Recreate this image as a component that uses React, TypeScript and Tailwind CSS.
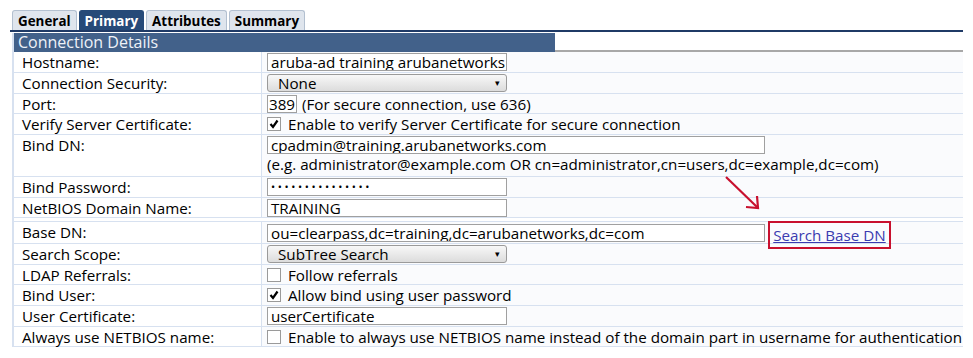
import React from "react";

const font = { fontFamily: '"Open Sans", "Noto Sans", sans-serif' };

function Row({ label, children, h = "h-[20.8px]" }: { label: string; children?: React.ReactNode; h?: string }) {
  return (
    <div className={`flex ${h} border-b border-[#d7e1f0]`}>
      <div className="w-[248px] shrink-0 border-r border-[#d7e1f0] pl-[8px] leading-[20px] whitespace-nowrap">{label}</div>
      <div className="flex-1 bg-[#fafbfd] pl-[5px] flex items-start whitespace-nowrap">{children}</div>
    </div>
  );
}

function TextBox({ w, value, small, tight }: { w: string; value: string; small?: boolean; tight?: boolean }) {
  return (
    <div
      className={`${w} h-[18px] mt-[1px] border border-[#a0a0a0] bg-white leading-[16px] whitespace-nowrap overflow-hidden ${
        tight ? "pl-[1px]" : "pl-[3px]"
      } ${small ? "text-[11px] tracking-[2.6px]" : ""}`}
    >
      {value}
    </div>
  );
}

function Select({ value }: { value: string }) {
  return (
    <div className="w-[240px] h-[18px] mt-[1px] border border-[#9a9a9a] rounded-[3px] bg-gradient-to-b from-[#f8f8f8] to-[#dcdcdc] leading-[16px] pl-[10px] pr-[6px] flex justify-between">
      <span>{value}</span>
      <span className="text-[9px] leading-[16px]">▾</span>
    </div>
  );
}

function Check({ checked, text }: { checked?: boolean; text: string }) {
  return (
    <div className="flex items-center h-[20px]">
      <div className="w-[14px] h-[14px] border border-[#9a9a9a] bg-white flex items-center justify-center">
        {checked && (
          <svg width="10" height="10" viewBox="0 0 10 10">
            <path d="M1.5 5 L4 8 L8.5 1.5" stroke="#000" strokeWidth="2.2" fill="none" />
          </svg>
        )}
      </div>
      <span className="ml-[7px] leading-[20px]">{text}</span>
    </div>
  );
}

export default function App() {
  return (
    <div className="w-[973px] h-[358px] bg-white text-[15.2px] text-black relative overflow-hidden" style={font}>
      <div className="pt-[10px] pl-[12px] flex gap-[2px] text-[13.4px] font-bold">
        <div className="h-[20px] px-[5px] leading-[20px] bg-[#dfe5ed] border border-b-0 border-[#b3c0d0] rounded-t-[3px]">General</div>
        <div className="h-[20px] px-[5px] leading-[20px] bg-[#264a78] text-white border border-b-0 border-[#264a78] rounded-t-[3px]">Primary</div>
        <div className="h-[20px] px-[5px] leading-[20px] bg-[#dfe5ed] border border-b-0 border-[#b3c0d0] rounded-t-[3px]">Attributes</div>
        <div className="h-[20px] px-[5px] leading-[20px] bg-[#dfe5ed] border border-b-0 border-[#b3c0d0] rounded-t-[3px]">Summary</div>
      </div>
      <div className="ml-[10px] w-[953px] h-[2px] bg-[#1f3a66]" />
      <div className="ml-[12px] w-[951px] border-l-2 border-[#d7e1f0]">
        <div className="flex h-[19px] mt-[1px]">
          <div className="w-[541px] bg-[#42618a] text-[#eef2f8] text-[16px] leading-[19px] pl-[4px]">Connection Details</div>
          <div className="flex-1 border-b-2 border-[#a8a8a8]" />
        </div>
        <div>
          <Row label="Hostname:">
            <TextBox w="w-[240px]" value="aruba-ad training arubanetworks" />
          </Row>
          <Row label="Connection Security:">
            <Select value="None" />
          </Row>
          <Row label="Port:">
            <TextBox w="w-[30px]" value="389" tight />
            <span className="ml-[5px] leading-[20px]">(For secure connection, use 636)</span>
          </Row>
          <Row label="Verify Server Certificate:">
            <Check checked text="Enable to verify Server Certificate for secure connection" />
          </Row>
          <Row label="Bind DN:" h="h-[41.6px]">
            <div className="flex flex-col">
              <TextBox w="w-[498px]" value="cpadmin@training.arubanetworks.com" />
              <span className="leading-[21px]">(e.g. administrator@example.com OR cn=administrator,cn=users,dc=example,dc=com)</span>
            </div>
          </Row>
          <Row label="Bind Password:">
            <TextBox w="w-[240px]" value="•••••••••••••••" small />
          </Row>
          <Row label="NetBIOS Domain Name:">
            <TextBox w="w-[240px]" value="TRAINING" />
          </Row>
        </div>
        <div className="mt-[3px] border-t border-[#d7e1f0]">
          <Row label="Base DN:" h="h-[22px]">
            <div className="mt-[1px] flex">
              <TextBox w="w-[498px]" value="ou=clearpass,dc=training,dc=arubanetworks,dc=com" />
            </div>
          </Row>
          <Row label="Search Scope:" h="h-[20.4px]">
            <Select value="SubTree Search" />
          </Row>
          <Row label="LDAP Referrals:" h="h-[20.6px]">
            <Check text="Follow referrals" />
          </Row>
          <Row label="Bind User:" h="h-[20.6px]">
            <Check checked text="Allow bind using user password" />
          </Row>
          <Row label="User Certificate:" h="h-[20.6px]">
            <TextBox w="w-[240px]" value="userCertificate" />
          </Row>
          <Row label="Always use NETBIOS name:" h="h-[20.6px]">
            <Check text="Enable to always use NETBIOS name instead of the domain part in username for authentication" />
          </Row>
        </div>
      </div>
      <div className="absolute left-[768px] top-[221px] w-[123px] h-[28px] border-2 border-[#c8102e] flex items-center justify-center">
        <span className="text-[#3b3bb0] underline leading-[20px]">Search Base DN</span>
      </div>
      <svg className="absolute left-[720px] top-[172px]" width="45" height="42" viewBox="0 0 45 42">
        <path d="M6 5 L37 35" stroke="#c8102e" strokeWidth="2.2" fill="none" />
        <path d="M26 35 L38 36 L37 24" stroke="#c8102e" strokeWidth="2.2" fill="none" />
      </svg>
    </div>
  );
}
